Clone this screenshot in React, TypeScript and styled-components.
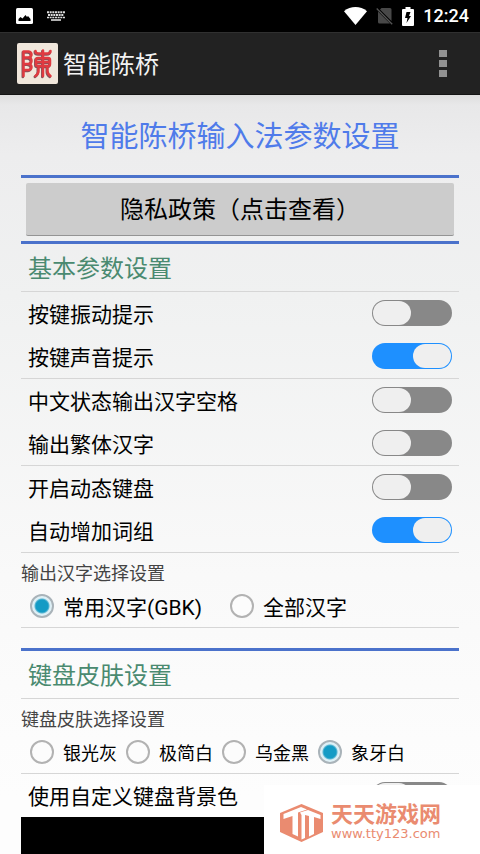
import React from "react";
import styled, { createGlobalStyle } from "styled-components";

const Global = createGlobalStyle`
  * { box-sizing: border-box; }
  body {
    margin: 0;
    overflow: hidden;
    font-family: Roboto, "Noto Sans CJK SC", sans-serif;
    color: #000;
  }
`;

const Screen = styled.div`
  display: flex;
  flex-direction: column;
  height: 100vh;
  overflow: hidden;
  background: #fff;
`;

const StatusBar = styled.header`
  flex: none;
  display: flex;
  align-items: center;
  justify-content: space-between;
  height: 32px;
  padding: 0 11px 0 16px;
  background: #000;
  color: #fff;
  svg { display: block; }
`;

const StatusGroup = styled.div<{ $gap: number }>`
  display: flex;
  align-items: center;
  gap: ${(p) => p.$gap}px;
`;

const Clock = styled.span`
  font-size: 18px;
  font-weight: 500;
  line-height: 34px;
`;

const AppBar = styled.div`
  flex: none;
  display: flex;
  align-items: center;
  height: 63px;
  padding: 0 33px 0 17px;
  gap: 5px;
  background: #222;
  border-top: 1px solid #303030;
  border-bottom: 1px solid #141414;
`;

const AppName = styled.h1`
  flex: 1;
  margin: 0;
  padding-top: 2px;
  font-size: 24px;
  font-weight: 400;
  line-height: 36px;
  color: #f3f3f3;
`;

const MenuButton = styled.button`
  display: flex;
  padding: 0;
  border: 0;
  background: none;
`;

const Content = styled.main`
  flex: 1;
  min-height: 0;
  display: flex;
  flex-direction: column;
  padding: 0 21px;
  background: linear-gradient(#dedede 0, #e8e8e9 10px, #ededee 60px, #f0f1f1 200px, #f9f9f9 480px, #fdfdfd 700px);
`;

const PageTitle = styled.h2`
  flex: none;
  margin: 0;
  height: 80px;
  font-size: 29px;
  font-weight: 400;
  line-height: 84px;
  text-align: center;
  color: #4f7bea;
`;

const Rule = styled.hr`
  flex: none;
  width: 100%;
  height: 3px;
  margin: 0;
  border: 0;
  background: #4b72cb;
`;

const PolicyButton = styled.button`
  flex: none;
  height: 53px;
  margin: 5px;
  padding: 3px 0 0;
  border: 0;
  border-bottom: 1px solid #949494;
  border-radius: 2px;
  background: #ccc;
  font: 24px/49px Roboto, "Noto Sans CJK SC", sans-serif;
  color: #000;
`;

const SectionTitle = styled.h3`
  flex: none;
  margin: 0;
  height: 47px;
  padding-left: 7px;
  font-size: 24px;
  font-weight: 400;
  line-height: 51px;
  color: #4a8a70;
`;

const Group = styled.div`
  flex: none;
  border-top: 1px solid #d6d6d6;
`;

const SettingRow = styled.label`
  display: flex;
  align-items: flex-start;
  justify-content: space-between;
  height: 43px;
  padding: 0 7px;
  font-size: 21px;
  line-height: 46px;
`;

const Toggle = styled.input`
  appearance: none;
  display: flex;
  flex: none;
  width: 80px;
  height: 26px;
  margin: 8px 0 0;
  padding: 1px;
  border-radius: 13px;
  background: #888;
  &::before {
    content: "";
    width: 38px;
    border-radius: 12px;
    background: #efefef;
  }
  &:checked {
    justify-content: flex-end;
    background: #1e90ff;
  }
`;

const Choices = styled.fieldset`
  margin: 0;
  padding: 0;
  border: 0;
`;

const Legend = styled.legend`
  padding: 0;
  height: 36px;
  font-size: 18px;
  line-height: 42px;
  color: #444;
`;

const ChoiceList = styled.div<{ $columns: string; $size: number }>`
  display: grid;
  grid-template-columns: ${(p) => p.$columns};
  height: 38px;
  padding-left: 9px;
  font-size: ${(p) => p.$size}px;
`;

const Choice = styled.label`
  display: flex;
  align-items: center;
  gap: 9px;
  height: 34px;
  white-space: nowrap;
`;

const Radio = styled.input`
  appearance: none;
  flex: none;
  width: 24px;
  height: 24px;
  margin: 0;
  border: 2px solid #b2b2b2;
  border-radius: 50%;
  background: #fcfcfc;
  &:checked {
    border-color: #a9b3b9;
    background: radial-gradient(circle, #149bc5 0 6px, #5cb7d3 7px, #d9eef5 8px, #e4f3f8 10px);
  }
`;

const Gap = styled.div`
  flex: none;
  height: 21px;
  border-top: 1px solid #d6d6d6;
`;

const Preview = styled.div`
  flex: 1;
  background: #000;
`;

const Watermark = styled.a`
  position: fixed;
  right: 0;
  bottom: 0;
  display: flex;
  align-items: center;
  gap: 8px;
  width: 216px;
  height: 69px;
  padding: 6px 0 0 16px;
  background: #fff;
  color: #ea8b70;
  text-decoration: none;
`;

const SiteText = styled.span`
  display: flex;
  flex-direction: column;
`;

const SiteName = styled.strong`
  font-size: 22px;
  font-weight: 700;
  line-height: 22px;
`;

const SiteUrl = styled.span`
  font-family: "DejaVu Sans", sans-serif;
  font-size: 13px;
  line-height: 16px;
`;

const PictureIcon = () => (
  <svg width="17" height="16" viewBox="0 0 17 16">
    <rect width="17" height="16" rx="1.5" fill="#fff" />
    <path d="M2.500 13V11l2-2 2 1.500 3-3.500 1.500 2 1-1 2.500 3v2z" fill="#000" />
  </svg>
);

const KeyboardIcon = () => (
  <svg width="18" height="10" viewBox="0 0 18 10" stroke="#ddd" fill="none">
    <path d="M0 1.200h18" strokeWidth="2" strokeDasharray="2 .66" />
    <path d="M1 4h16" strokeWidth="2" strokeDasharray="2 .66" />
    <path d="M0 6.500h18" strokeWidth="1.600" strokeDasharray="2 .66" />
    <path d="M4 9h10" strokeWidth="1.600" />
  </svg>
);

const WifiIcon = () => (
  <svg width="23" height="18" viewBox="0 0 23 18">
    <path d="M0 4.300C6.500-1.300 16.500-1.300 23 4.300L11.500 18z" fill="#fff" />
  </svg>
);

const NoSimIcon = () => (
  <svg width="17" height="18" viewBox="0 0 17 18">
    <path d="M5.500 1H14a1.500 1.500 0 0 1 1.500 1.500V14L4 2.500zM2 4.500L14 16.500H3.500A1.500 1.500 0 0 1 2 15z" fill="#484848" />
    <path d="M.7 1.500l15.500 15.700" stroke="#555" strokeWidth="1.300" />
  </svg>
);

const BatteryIcon = () => (
  <svg width="12" height="19" viewBox="0 0 12 19">
    <path d="M3.500 0h5v2H11a1 1 0 0 1 1 1v15a1 1 0 0 1-1 1H1a1 1 0 0 1-1-1V3a1 1 0 0 1 1-1h2.500z" fill="#fff" />
    <path d="M4.500 5h4L7 9h2l-4.500 7 1-5H3z" fill="#000" />
  </svg>
);

const SEAL =
  "M6.500 33V8.500h5q3 .5 3 3t-3 3h-5M11.500 14.500q3 .5 3 3.200t-3 3.200h-5M11.500 21q3 .5 3 3t-3 3h-4M18.500 8q0 2.500 3 2.500h9q3 0 3-2.500M26 7.500V33M21 15h10q2 0 2 2v4q0 2-2 2H21q-2 0-2-2v-4q0-2 2-2zM19 19h14M21.500 24v4q0 3-3 5M30.500 24v4q0 3 3 5";

const AppLogo = () => (
  <svg width="41" height="41" viewBox="0 0 41 41">
    <rect width="41" height="41" rx="2" fill="#f0e7dc" />
    <g fill="none" strokeLinecap="round" strokeLinejoin="round">
      <path d={SEAL} stroke="#86505a" strokeWidth="2.600" transform="translate(-.7 .9)" />
      <path d={SEAL} stroke="#e03a40" strokeWidth="2.500" />
    </g>
  </svg>
);

const OverflowIcon = () => (
  <svg width="8" height="27" viewBox="0 0 8 27" fill="#929292">
    <rect width="8" height="7" />
    <rect y="10" width="8" height="7" />
    <rect y="20" width="8" height="7" />
  </svg>
);

const SiteLogo = () => (
  <svg width="43" height="38" viewBox="0 0 43 38">
    <path d="M21.500 0L43 9v19L21.500 38 0 28V9z" fill="#ea8b70" />
    <path d="M3.500 10L21 3l6 2.500-9 3v24l-5.500-2.500V12l-9 3z" fill="#fff" />
    <path d="M20 8.500l8-2.500 12.500 5v4L34 13v17l-5 2.500V12l-4-1v23l-3.500 1.500V11z" fill="#fff" />
  </svg>
);

const switchGroups = [
  [
    { label: "按键振动提示", on: false },
    { label: "按键声音提示", on: true },
  ],
  [
    { label: "中文状态输出汉字空格", on: false },
    { label: "输出繁体汉字", on: false },
  ],
  [
    { label: "开启动态键盘", on: false },
    { label: "自动增加词组", on: true },
  ],
];

type ChoiceGroupProps = {
  legend: string;
  name: string;
  options: string[];
  selected: string;
  columns: string;
  size: number;
};

const ChoiceGroup = ({ legend, name, options, selected, columns, size }: ChoiceGroupProps) => (
  <Group>
    <Choices>
      <Legend>{legend}</Legend>
      <ChoiceList $columns={columns} $size={size}>
        {options.map((option) => (
          <Choice key={option}>
            <Radio type="radio" name={name} value={option} defaultChecked={option === selected} />
            {option}
          </Choice>
        ))}
      </ChoiceList>
    </Choices>
  </Group>
);

const SwitchRow = ({ label, on }: { label: string; on: boolean }) => (
  <SettingRow>
    {label}
    <Toggle type="checkbox" role="switch" defaultChecked={on} />
  </SettingRow>
);

export default function App() {
  return (
    <Screen>
      <Global />
      <StatusBar>
        <StatusGroup $gap={14}>
          <PictureIcon />
          <KeyboardIcon />
        </StatusGroup>
        <StatusGroup $gap={9}>
          <WifiIcon />
          <NoSimIcon />
          <BatteryIcon />
          <Clock>12:24</Clock>
        </StatusGroup>
      </StatusBar>
      <AppBar>
        <AppLogo />
        <AppName>智能陈桥</AppName>
        <MenuButton type="button" aria-label="更多选项">
          <OverflowIcon />
        </MenuButton>
      </AppBar>
      <Content>
        <PageTitle>智能陈桥输入法参数设置</PageTitle>
        <Rule />
        <PolicyButton type="button">隐私政策（点击查看）</PolicyButton>
        <Rule />
        <SectionTitle>基本参数设置</SectionTitle>
        {switchGroups.map((rows) => (
          <Group key={rows[0].label}>
            {rows.map((row) => (
              <SwitchRow key={row.label} {...row} />
            ))}
          </Group>
        ))}
        <ChoiceGroup
          legend="输出汉字选择设置"
          name="charset"
          options={["常用汉字(GBK)", "全部汉字"]}
          selected="常用汉字(GBK)"
          columns="200px 1fr"
          size={21}
        />
        <Gap />
        <Rule />
        <SectionTitle>键盘皮肤设置</SectionTitle>
        <ChoiceGroup
          legend="键盘皮肤选择设置"
          name="skin"
          options={["银光灰", "极简白", "乌金黑", "象牙白"]}
          selected="象牙白"
          columns="repeat(4, 96px)"
          size={18}
        />
        <Group>
          <SwitchRow label="使用自定义键盘背景色" on={false} />
        </Group>
        <Preview />
      </Content>
      <Watermark href="#">
        <SiteLogo />
        <SiteText>
          <SiteName>天天游戏网</SiteName>
          <SiteUrl>www.tty123.com</SiteUrl>
        </SiteText>
      </Watermark>
    </Screen>
  );
}
